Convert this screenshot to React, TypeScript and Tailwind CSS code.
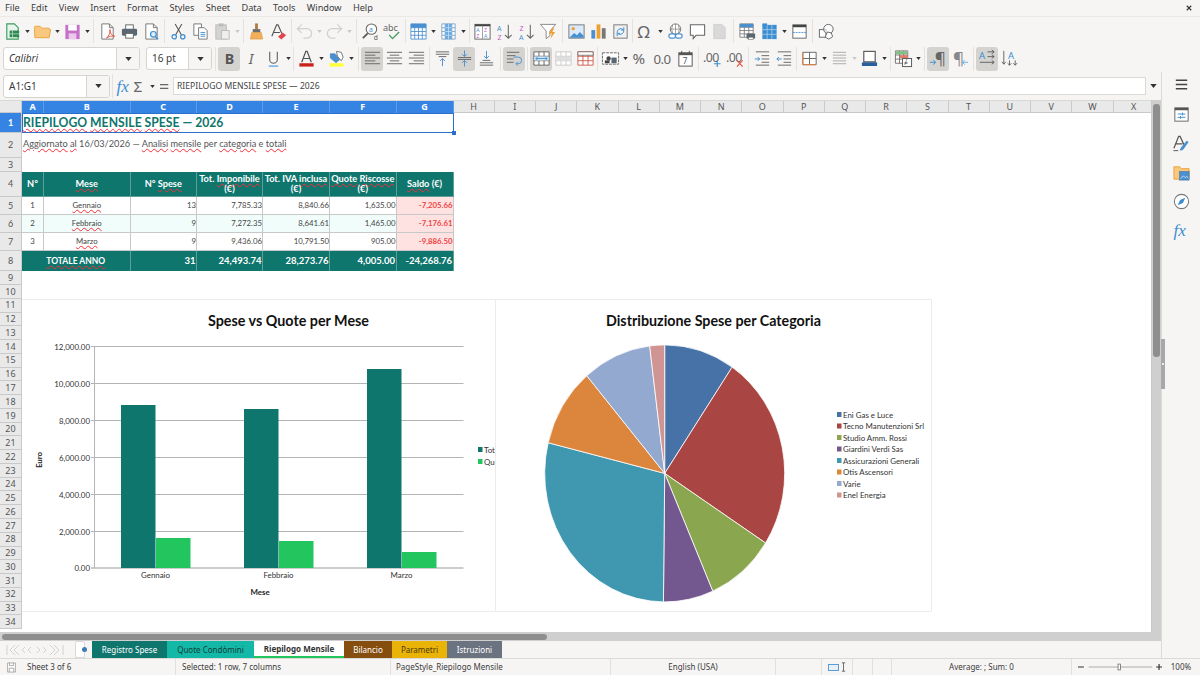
import type { ReactNode } from "react";

const SW = { fill: "none", strokeWidth: 1.1 };

function Lines({ rows, color = "#666", x = 3 }: { rows: number[][]; color?: string; x?: number }) {
  return (
    <path
      d={rows.map(([y, a, b]) => `M${a ?? x} ${y}H${b}`).join("")}
      stroke={color}
      fill="none"
      strokeWidth="1"
    />
  );
}

function Tbl({ x = 2, y = 3, w = 16, h = 14, c = 3, r = 3, color = "#666" }: { x?: number; y?: number; w?: number; h?: number; c?: number; r?: number; color?: string }) {
  const v = Array.from({ length: c - 1 }, (_, i) => `M${x + ((i + 1) * w) / c} ${y}v${h}`).join("");
  const z = Array.from({ length: r - 1 }, (_, i) => `M${x} ${y + ((i + 1) * h) / r}h${w}`).join("");
  return <path d={`M${x} ${y}h${w}v${h}h${-w}z${v}${z}`} stroke={color} fill="#fff" strokeWidth="0.9" />;
}

const doc = (s = "#777", f = "#fff") => <path d="M4 2h8l4 4v12H4zM12 2v4h4" stroke={s} fill={f} strokeWidth="1" />;

const ICONS: Record<string, ReactNode> = {
  new: (
    <>
      <path d="M4 2h8l4 4v12H4z" stroke="#3d9b5f" fill="#e8f5ec" strokeWidth="1.2" />
      <rect x="7" y="9" width="10" height="7" fill="#2f8a50" />
      <path d="M10 9v7M7 12.5h10" stroke="#cfe9d8" strokeWidth=".7" />
    </>
  ),
  open: <path d="M1.5 5.5a1 1 0 0 1 1-1h5l2 2h7a1 1 0 0 1 1 1V8h1l-1.5 8.5h-15z" fill="#f9c77e" stroke="#e8a33d" />,
  save: (
    <>
      <path d="M2.5 3h15v15h-15z" fill="#c671c8" />
      <rect x="5.5" y="3" width="9" height="6" fill="#fff" />
      <rect x="6" y="12" width="8" height="6" fill="#ecc8ed" />
    </>
  ),
  pdf: (
    <>
      {doc()}
      <path d="M9 17c3-3 4-6 3.5-9 0 4 2 6 5 7-3-.5-6 0-8.5 2z" stroke="#e0533d" fill="none" strokeWidth="1" />
    </>
  ),
  print: (
    <>
      <rect x="6" y="3" width="8" height="5" fill="#fff" stroke="#666" />
      <rect x="2" y="7" width="16" height="7.5" rx="1.5" fill="#5a6672" />
      <rect x="6" y="12" width="8" height="5" fill="#fff" stroke="#666" />
    </>
  ),
  preview: (
    <>
      {doc()}
      <circle cx="12" cy="13" r="3" stroke="#3d8ed1" fill="#dcecf9" strokeWidth="1.3" />
      <path d="M14 15.5l3 2.5" stroke="#3d8ed1" strokeWidth="1.5" />
    </>
  ),
  cut: (
    <>
      <path d="M7 13.5L13.5 2M13 13.5L6.5 2" stroke="#555" {...SW} />
      <circle cx="5.5" cy="15.5" r="2.3" stroke="#3d8ed1" fill="none" strokeWidth="1.3" />
      <circle cx="14.5" cy="15.5" r="2.3" stroke="#3d8ed1" fill="none" strokeWidth="1.3" />
    </>
  ),
  copy: (
    <>
      <path d="M3 2h8v12H3z" fill="#fff" stroke="#777" />
      <path d="M8 6h6l3 3v9H8z" fill="#fff" stroke="#777" />
      <Lines color="#4a90d0" rows={[[11, 10, 15], [13, 10, 15], [15, 10, 15]]} />
    </>
  ),
  paste: (
    <>
      <rect x="3" y="3" width="11" height="15" fill="#d3d3d3" stroke="#bbb" />
      <rect x="6" y="1.5" width="5" height="3" fill="#bbb" />
      <rect x="9" y="9" width="8" height="9" fill="#eee" stroke="#bbb" />
    </>
  ),
  clone: (
    <>
      <path d="M8.5 1.5h3v6h-3z" fill="#b07a3d" />
      <path d="M6 7.5h8V11H6z" fill="#6c6c6c" />
      <path d="M5 11h10l1.5 7h-13z" fill="#f2ae58" stroke="#d98f35" strokeWidth=".6" />
    </>
  ),
  clear: (
    <>
      <path d="M3 15L8 3h1.5l4 9M5 11h6.5" stroke="#555" fill="none" strokeWidth="1.2" />
      <path d="M9.5 15.5l5-4.5 3.5 3-5 4.5z" fill="#e0474c" />
    </>
  ),
  undo: <path d="M7 2.5L2.5 7 7 11.5M3 7h9.5a5 5 0 0 1 0 10H9" stroke="#d0d0d0" fill="none" strokeWidth="1.3" />,
  redo: <path d="M13 2.5L17.5 7 13 11.5M17 7H7.5a5 5 0 0 0 0 10H11" stroke="#d0d0d0" fill="none" strokeWidth="1.3" />,
  find: (
    <>
      <circle cx="11" cy="7.5" r="5.5" stroke="#666" fill="#fff" strokeWidth="1.1" />
      <path d="M7 12L2 17" stroke="#555" strokeWidth="1.8" />
      <text x="8.5" y="10" fontSize="7" fill="#3d8ed1">a</text>
      <text x="13.5" y="18.5" fontSize="7" fill="#555">d</text>
    </>
  ),
  spell: (
    <>
      <text x="0" y="9" fontSize="9.5" fill="#666">abc</text>
      <path d="M6.5 13.5l3.5 4 7-7" stroke="#3d9b5f" fill="none" strokeWidth="1.4" />
    </>
  ),
  rows: (
    <>
      <Tbl x={2} y={2} w={16} h={16} c={4} r={4} color="#4a90d0" />
      <rect x="2" y="2" width="16" height="4" fill="#4a90d0" />
    </>
  ),
  cols: (
    <>
      <Tbl x={3} y={2} w={14} h={16} c={4} r={4} color="#7a9dbb" />
      <rect x="6.5" y="2" width="7" height="16" fill="#6aaae2" />
      <path d="M10 2v16M6.5 6h7M6.5 10h7M6.5 14h7" stroke="#d7e9f8" strokeWidth=".7" />
    </>
  ),
  sort: (
    <>
      <rect x="2" y="2.5" width="16" height="15.5" fill="#fff" stroke="#666" />
      <rect x="2" y="2.5" width="16" height="2" fill="#444" />
      <path d="M10 4v14" stroke="#888" strokeWidth=".8" />
      <text x="3.5" y="10.5" fontSize="5.5" fill="#4a90d0">A</text>
      <text x="3.5" y="17" fontSize="5.5" fill="#c35fc9">Z</text>
      <text x="11.5" y="10.5" fontSize="5.5" fill="#c35fc9">Z</text>
      <text x="11.5" y="17" fontSize="5.5" fill="#4a90d0">A</text>
    </>
  ),
  sortaz: (
    <>
      <text x="2" y="9" fontSize="7.5" fill="#4a90d0">A</text>
      <text x="2.5" y="18.5" fontSize="7.5" fill="#c35fc9">Z</text>
      <path d="M14 3v14M10.5 13.5L14 17l3.5-3.5" stroke="#666" fill="none" strokeWidth="1.1" />
    </>
  ),
  sortza: (
    <>
      <text x="2.5" y="9" fontSize="7.5" fill="#c35fc9">Z</text>
      <text x="2" y="18.5" fontSize="7.5" fill="#4a90d0">A</text>
      <path d="M14 3v14M10.5 13.5L14 17l3.5-3.5" stroke="#666" fill="none" strokeWidth="1.1" />
    </>
  ),
  filter: (
    <>
      <path d="M1.5 2.5h16l-6 7v5l-4 3v-8z" fill="#fff" stroke="#888" />
      <path d="M14 6l-3.5 6h3l-1.5 6 5-7.5h-3l2-4.5z" fill="#f0a030" />
    </>
  ),
  image: (
    <>
      <rect x="2" y="3" width="16" height="14" fill="#dbeafa" stroke="#777" />
      <circle cx="6.5" cy="7" r="1.8" fill="#f0a030" />
      <path d="M2.5 16.5l5-5 3 2.5 3-3.5 4 4v2z" fill="#4a90d0" />
    </>
  ),
  chart: (
    <>
      <rect x="2.5" y="8.5" width="4" height="9" fill="#4a90d0" />
      <rect x="8" y="2.5" width="4" height="15" fill="#f0a030" />
      <rect x="13.5" y="6.5" width="4" height="11" fill="#777" />
    </>
  ),
  pivot: (
    <>
      <rect x="3" y="3" width="14" height="14" fill="#f1f1f1" stroke="#777" />
      <path d="M6.5 12a4 4 0 0 1 6.5-4M13.5 8.5a4 4 0 0 1-6 4" stroke="#3d8ed1" fill="none" />
      <path d="M13.5 5.5v3h-3M6.5 15v-3h3" stroke="#3d8ed1" fill="none" />
    </>
  ),
  omega: <text x="1.5" y="16.5" fontSize="18" fill="#666">Ω</text>,
  link: (
    <>
      <circle cx="10" cy="7.5" r="5.5" fill="#fff" stroke="#777" />
      <path d="M4.5 7.5h11M10 2v11M7 3q-2 4.5 0 9M13 3q2 4.5 0 9" stroke="#777" fill="none" strokeWidth=".7" />
      <rect x="3" y="12.5" width="7" height="4.5" rx="2.2" fill="#fff" stroke="#4a90d0" strokeWidth="1.2" />
      <rect x="10" y="12.5" width="7" height="4.5" rx="2.2" fill="#fff" stroke="#4a90d0" strokeWidth="1.2" />
    </>
  ),
  comment: <path d="M2.5 3h15v11h-9l-3 3.5V14h-3z" fill="#fff" stroke="#666" strokeWidth="1.1" />,
  note: <path d="M4 2.5h8.5L16 6v11.5H4z" fill="#d9d9d9" stroke="#d0d0d0" />,
  headers: (
    <>
      <Tbl x={2} y={2} w={14} h={14} c={3} r={4} color="#777" />
      <rect x="2" y="2" width="14" height="3.5" fill="#4a90d0" />
      <rect x="9" y="12" width="9" height="5.5" rx="1" fill="#5a6672" />
      <rect x="11" y="16" width="5" height="2.5" fill="#fff" stroke="#666" strokeWidth=".6" />
    </>
  ),
  freeze: (
    <>
      <rect x="2.5" y="3" width="15" height="15" fill="#3d8ed1" />
      <path d="M7.5 3v15M12.5 3v15M2.5 8h15M2.5 13h15" stroke="#bcd9f2" strokeWidth=".7" />
      <rect x="2.5" y="1.5" width="5" height="2.5" fill="#3d8ed1" />
    </>
  ),
  split: (
    <>
      <rect x="3" y="3" width="14" height="14" fill="#fff" stroke="#666" />
      <rect x="3" y="3" width="14" height="2.5" fill="#444" />
      <path d="M3 11h14" stroke="#4a90d0" strokeDasharray="2 1" />
    </>
  ),
  shapes: (
    <>
      <rect x="2.5" y="8" width="7" height="8" fill="#fff" stroke="#666" />
      <circle cx="12" cy="7.5" r="5" fill="#fff" fillOpacity=".6" stroke="#666" />
      <path d="M11 10.5l4 1 1.5 4-4 2.5-4-2z" fill="#fff" stroke="#666" />
    </>
  ),
  bold: <text x="5" y="15.5" fontSize="15" fontWeight="700" fill="#555">B</text>,
  italic: <text x="7" y="15.5" fontSize="15" fontStyle="italic" fill="#666">I</text>,
  underline: (
    <>
      <path d="M6 3v8a4 4 0 0 0 8 0V3" stroke="#666" fill="none" strokeWidth="1.2" />
      <path d="M5 18h10" stroke="#6aaae2" strokeWidth="1.5" />
    </>
  ),
  fontcolor: (
    <>
      <path d="M5 14L9.3 2.5h1.4L15 14M6.5 10h7" stroke="#555" fill="none" strokeWidth="1.3" />
      <rect x="2.5" y="15" width="15" height="3.5" fill="#c9211e" />
    </>
  ),
  bgcolor: (
    <>
      <path d="M3.5 5h5l5 6-4 3.5-6-5z" fill="#4a90d0" stroke="#3d7cb5" strokeWidth=".6" />
      <path d="M10 2.5l5 1 2 5-2 4-4-5z" fill="#fff" stroke="#666" strokeWidth=".9" />
      <rect x="2.5" y="15" width="15" height="3.5" fill="#ffff38" />
    </>
  ),
  left: <Lines rows={[[3.5, 2, 18], [6.5, 2, 13], [9.5, 2, 18], [12.5, 2, 13], [15.5, 2, 18]]} />,
  center: <Lines rows={[[3.5, 2, 18], [6.5, 5, 15], [9.5, 2, 18], [12.5, 5, 15], [15.5, 2, 18]]} />,
  right: <Lines rows={[[3.5, 2, 18], [6.5, 7, 18], [9.5, 2, 18], [12.5, 7, 18], [15.5, 2, 18]]} />,
  top: (
    <>
      <Lines rows={[[3, 3, 17], [5.5, 3, 17], [8, 6, 14]]} />
      <path d="M10 18v-8M7.5 12.5L10 10l2.5 2.5" stroke="#4a90d0" fill="none" />
    </>
  ),
  middle: (
    <>
      <Lines rows={[[9, 3, 17], [11, 3, 17]]} />
      <path d="M10 1.5v6M7.5 5.5L10 8l2.5-2.5M10 18.5v-6M7.5 14.5L10 12l2.5 2.5" stroke="#4a90d0" fill="none" />
    </>
  ),
  bottom: (
    <>
      <Lines rows={[[12, 6, 14], [14.5, 3, 17], [17, 3, 17]]} />
      <path d="M10 2v8M7.5 7.5L10 10l2.5-2.5" stroke="#4a90d0" fill="none" />
    </>
  ),
  wrap: (
    <>
      <Lines rows={[[3.5, 2, 15], [7, 2, 11], [10.5, 2, 9], [14, 2, 9]]} />
      <path d="M9 8.5h5q3.5 0 3.5 3.5T14 15.5h-2M13.5 13.5L11.5 15.5l2 2" stroke="#4a90d0" fill="none" />
    </>
  ),
  merge: (
    <>
      <Tbl x={2} y={3} w={16} h={14} c={3} r={3} color="#555" />
      <rect x="2.5" y="7.8" width="15" height="4.4" fill="#cfe4f7" />
      <path d="M4 10h12M6 8.3L4 10l2 1.7M14 8.3L16 10l-2 1.7" stroke="#3d8ed1" fill="none" strokeWidth=".9" />
    </>
  ),
  unmerge: (
    <>
      <Tbl x={2} y={3} w={16} h={14} c={3} r={3} color="#c4c4c4" />
      <rect x="2.5" y="7.8" width="15" height="4.4" fill="#dedede" />
    </>
  ),
  mergeoff: (
    <>
      <Tbl x={2} y={3} w={16} h={14} c={3} r={3} color="#c9503f" />
      <rect x="2" y="3" width="16" height="3.5" fill="#fff" stroke="#666" strokeWidth=".8" />
    </>
  ),
  currency: (
    <>
      <rect x="1.5" y="4" width="17" height="12" fill="#fff" stroke="#666" strokeDasharray="3 1" />
      <circle cx="8" cy="10" r="2.3" fill="#444" />
      <rect x="11" y="9" width="5.5" height="6" fill="#5a6672" />
      <rect x="4" y="12" width="5" height="3" fill="#444" />
    </>
  ),
  percent: <text x="0.5" y="15.5" fontSize="16" fill="#666">%</text>,
  number: <text x="-0.5" y="15.5" fontSize="14" letterSpacing="-.6" fill="#666">0.0</text>,
  date: (
    <>
      <rect x="3" y="4" width="14" height="14" fill="#fff" stroke="#555" />
      <rect x="3" y="4" width="14" height="2.5" fill="#555" />
      <path d="M6 2v3M14 2v3" stroke="#555" />
      <text x="7" y="16" fontSize="8.5" fill="#555">7</text>
    </>
  ),
  adddec: (
    <>
      <text x="0" y="14" fontSize="13" letterSpacing="-.6" fill="#666">.00</text>
      <path d="M15 12v7M11.5 15.5h7" stroke="#3d8ed1" strokeWidth="1.2" />
    </>
  ),
  remdec: (
    <>
      <text x="0" y="14" fontSize="13" letterSpacing="-.6" fill="#666">.00</text>
      <path d="M11.5 12l6 6.5M17.5 12l-6 6.5" stroke="#e0533d" strokeWidth="1.2" />
    </>
  ),
  indent: (
    <>
      <Lines rows={[[3, 3, 17], [7, 9, 17], [10.5, 9, 17], [14, 9, 17], [17, 3, 17]]} />
      <path d="M2 10.5h5M5 8.5l2 2-2 2" stroke="#3d8ed1" fill="none" />
    </>
  ),
  outdent: (
    <>
      <Lines rows={[[3, 3, 17], [7, 9, 17], [10.5, 9, 17], [14, 9, 17], [17, 3, 17]]} />
      <path d="M7 10.5H2M4 8.5l-2 2 2 2" stroke="#3d8ed1" fill="none" />
    </>
  ),
  borders: (
    <>
      <path d="M3 3.5h14v13H3zM10 3.5v13M3 10h14" stroke="#666" fill="#fff" />
      <path d="M3 3.5v13h14" stroke="#e8823d" fill="none" />
    </>
  ),
  bstyle: <Lines color="#aaa" rows={[[3.5, 3, 17], [6.5, 3, 17], [9.5, 3, 17], [12.5, 3, 17], [15.5, 3, 17]]} />,
  bcolor: (
    <>
      <rect x="4" y="2.5" width="12" height="11" fill="#fff" stroke="#555" strokeWidth="1.2" />
      <rect x="2" y="14" width="16" height="4" rx="1" fill="#2a6099" />
    </>
  ),
  cond: (
    <>
      <Tbl x={1.5} y={2} w={13} h={13} c={3} r={3} color="#666" />
      <rect x="1.5" y="2.5" width="13" height="3" fill="#80c080" />
      <rect x="6" y="6.5" width="8.5" height="3" fill="#e57a6b" />
      <rect x="9" y="10" width="9.5" height="8.5" fill="#fff" stroke="#555" />
      <text x="10.5" y="17" fontSize="7" fill="#444">≠</text>
    </>
  ),
  ltr: (
    <>
      <text x="6" y="15.5" fontSize="18" fill="#666">¶</text>
      <path d="M1 14h6M4.5 11.5L7 14l-2.5 2.500" stroke="#3d8ed1" fill="none" />
    </>
  ),
  rtl: (
    <>
      <text x="2" y="15.5" fontSize="18" fill="#888">¶</text>
      <path d="M18 14h-6M14.5 11.5L12 14l2.5 2.5" stroke="#6aaae2" fill="none" />
    </>
  ),
  texth: (
    <>
      <text x="1" y="10" fontSize="10" fill="#3d8ed1">A</text>
      <path d="M10 3h7M14.5 1l2.5 2-2.5 2M10 8h7M14.5 6l2.5 2-2.5 2M2 14h15M14.5 12l2.5 2-2.5 2" stroke="#555" fill="none" strokeWidth=".9" />
    </>
  ),
  textv: (
    <>
      <text x="8.5" y="11" fontSize="10" fill="#3d8ed1">A</text>
      <path d="M4 2v14M2 13.5l2 2.5 2-2.5M10 12v5M8 15l2 2 2-2M16 12v5M14 15l2 2 2-2" stroke="#555" fill="none" strokeWidth=".9" />
    </>
  ),
  menu: <path d="M4 5.5h12M4 10h12M4 14.5h12" stroke="#444" strokeWidth="1.7" />,
  props: (
    <>
      <rect x="3" y="3" width="14" height="14" fill="#fff" stroke="#666" />
      <rect x="3" y="3" width="14" height="2.5" fill="#555" />
      <path d="M6 9.5h8M6 13h8M11 8v3M9 11.5v3" stroke="#3d8ed1" />
    </>
  ),
  styles: (
    <>
      <path d="M2 15L7 2.5h1.5L13 12M4 10.5h7" stroke="#555" fill="none" strokeWidth="1.3" />
      <path d="M8 17q3 1 4.5-1.5l5-7-2-1.5-5.5 6.5q-1 2-2 3.5z" fill="#4a90d0" />
      <path d="M1.5 17.5h5" stroke="#555" />
    </>
  ),
  gallery: (
    <>
      <path d="M2 4h6l2 2h8v11H2z" fill="#f9c77e" stroke="#e8a33d" />
      <rect x="8" y="9" width="10" height="9" fill="#4a90d0" stroke="#3472a8" strokeWidth=".6" />
      <path d="M9 16.5l3-3 2 2 1.5-1.5 2 2" stroke="#e4f0fa" fill="none" strokeWidth=".8" />
    </>
  ),
  nav: (
    <>
      <circle cx="10" cy="10" r="7.5" fill="#fff" stroke="#777" strokeWidth="1.1" />
      <path d="M14 6l-2.5 5.5L6 14l2.5-5.500z" fill="#3d8ed1" />
    </>
  ),
  fx: <text x="1.5" y="15.5" fontSize="18" fontStyle="italic" fill="#3d8ed1" className="font-['Liberation_Serif',serif]">fx</text>,
  sigma: <text x="3" y="16.5" fontSize="18" fill="#666">Σ</text>,
  equal: <path d="M4 7.5h11M4 12.5h11" stroke="#666" strokeWidth="1.8" />,
  disk: (
    <>
      <path d="M4 3h12v14H4z" fill="#fff" stroke="#888" />
      <path d="M7 3v4h6V3M6.5 17v-6h7v6" fill="none" stroke="#888" />
    </>
  ),
};

function Ic({ n, box = false }: { n: string; box?: boolean }) {
  return (
    <span className={`flex h-[24px] w-[22px] shrink-0 items-center justify-center rounded-[3px] ${box ? "bg-[#d5d3d0]" : ""}`}>
      <svg viewBox="0 0 20 20" className="h-[19px] w-[19px] overflow-visible">{ICONS[n]}</svg>
    </span>
  );
}

function D({ off = false }: { off?: boolean }) {
  return (
    <span className="flex h-[24px] w-[8px] shrink-0 items-center justify-center">
      <svg viewBox="0 0 6 4" className="h-[3px] w-[5px]"><path d="M0 0h6L3 4z" fill={off ? "#c8c8c8" : "#333"} /></svg>
    </span>
  );
}

function Sep({ className }: { className: string }) {
  return (
    <span className={`flex h-[24px] shrink-0 justify-center ${className}`}>
      <span className="h-full w-px bg-[#e4e2df]" />
    </span>
  );
}

function Combo({ text, className, drop, italic }: { text: string; className: string; drop: string; italic?: boolean }) {
  return (
    <div className={`flex h-[23px] shrink-0 overflow-hidden rounded-[3px] border border-[#d6d4d1] bg-white ${className}`}>
      <span className={`flex-1 self-center pl-[5px] text-[10px] text-[#3a3a3a] ${italic ? "italic" : ""}`}>{text}</span>
      <span className={`flex items-center justify-center border-l border-[#d6d4d1] bg-[#f6f5f4] ${drop}`}>
        <svg viewBox="0 0 8 5" className="h-[4px] w-[7px]"><path d="M0 0h8L4 5z" fill="#333" /></svg>
      </span>
    </div>
  );
}

const menus = ["File", "Edit", "View", "Insert", "Format", "Styles", "Sheet", "Data", "Tools", "Window", "Help"];

const columns: [string, string][] = [
  ["A", "w-[22px]"],
  ["B", "w-[86.5px]"],
  ["C", "w-[66.5px]"],
  ["D", "w-[66px]"],
  ["E", "w-[67px]"],
  ["F", "w-[66.5px]"],
  ["G", "w-[57px]"],
];
const plainColumns = ["H", "I", "J", "K", "L", "M", "N", "O", "P", "Q", "R", "S", "T", "U", "V", "W", "X"];

function W({ children }: { children: ReactNode }) {
  return <span className="underline decoration-red-500 decoration-wavy decoration-1 underline-offset-1">{children}</span>;
}

function RowHead({ n, on = false }: { n: number; on?: boolean }) {
  return (
    <div className={`flex w-[22px] shrink-0 items-center justify-center border-r border-b border-[#c9c9c9] text-[9px] ${on ? "bg-[#3584e4] font-bold text-white" : "bg-[#e9e9e9] text-[#555]"}`}>
      {n}
    </div>
  );
}

function Head({ w, children }: { w: string; children: ReactNode }) {
  return (
    <div className={`flex shrink-0 items-center justify-center border-r border-b border-[#5f9f99] bg-[#0f766e] text-center text-[9.2px] leading-[10px] font-bold whitespace-nowrap text-white ${w}`}>
      <span>{children}</span>
    </div>
  );
}

const body = [
  { n: 5, id: "1", mese: "Gennaio", sp: "13", imp: "7,785.33", iva: "8,840.66", q: "1,635.00", s: "-7,205.66", bg: "bg-white" },
  { n: 6, id: "2", mese: "Febbraio", sp: "9", imp: "7,272.35", iva: "8,641.61", q: "1,465.00", s: "-7,176.61", bg: "bg-[#f0fdfa]" },
  { n: 7, id: "3", mese: "Marzo", sp: "9", imp: "9,436.06", iva: "10,791.50", q: "905.00", s: "-9,886.50", bg: "bg-white" },
];

function Td({ w, bg, children, center }: { w: string; bg: string; children: ReactNode; center?: boolean }) {
  return (
    <div className={`flex shrink-0 items-center border-r border-b border-[#c8c8c8] text-[7.8px] text-[#444] ${center ? "justify-center" : "justify-end"} ${w} ${bg}`}>
      <span>{children}</span>
    </div>
  );
}

function Tot({ w, children }: { w: string; children: ReactNode }) {
  return (
    <div className={`flex shrink-0 items-center justify-end border-r border-[#5f9f99] bg-[#0f766e] pr-[0.5px] text-[9.5px] font-bold text-white ${w}`}>
      {children}
    </div>
  );
}

const emptyRows = Array.from({ length: 25 }, (_, i) => i + 10);

const bars = [
  { label: "Gennaio", x: 121, t: 405, q: 538 },
  { label: "Febbraio", x: 244, t: 409, q: 541 },
  { label: "Marzo", x: 367, t: 369, q: 552 },
];
const ticks = [
  ["12,000.00", 346.5],
  ["10,000.00", 383.5],
  ["8,000.00", 420.5],
  ["6,000.00", 457.5],
  ["4,000.00", 494.5],
  ["2,000.00", 531.5],
  ["0.00", 568],
] as const;

function BarChart() {
  return (
    <svg viewBox="22 299 473 313" className="h-[313px] w-[473px] shrink-0 bg-white font-['Lato',sans-serif]">
      <path d="M22 299.5H495M22 611.5H495" stroke="#ececec" />
      <text x="288.5" y="326" fontSize="15" fontWeight="700" fill="#111" textAnchor="middle" textLength="161" lengthAdjust="spacingAndGlyphs">Spese vs Quote per Mese</text>
      {ticks.map(([l, y]) => (
        <g key={l}>
          <path d={`M91 ${y}H463.5`} stroke={l === "0.00" ? "#999" : "#b5b5b5"} strokeWidth="1" />
          <text x="90" y={y + 3} fontSize="7.9" fill="#333" textAnchor="end">{l}</text>
        </g>
      ))}
      <path d="M94.5 346v222" stroke="#b5b5b5" />
      {bars.map((b) => (
        <g key={b.label}>
          <rect x={b.x} y={b.t} width="34.5" height={568 - b.t} fill="#0f766e" />
          <rect x={b.x + 35} y={b.q} width="34.5" height={568 - b.q} fill="#22c55e" />
          <text x={b.x + 34.5} y="578" fontSize="7.9" fill="#333" textAnchor="middle">{b.label}</text>
        </g>
      ))}
      <text x="260" y="595" fontSize="7.9" fontWeight="700" fill="#222" textAnchor="middle">Mese</text>
      <text x="0" y="0" fontSize="7.9" fontWeight="700" fill="#222" textAnchor="middle" transform="translate(42 460) rotate(-90)">Euro</text>
      <rect x="478" y="447" width="4.5" height="5" fill="#0f766e" />
      <rect x="478" y="459" width="4.5" height="5" fill="#22c55e" />
      <text x="484" y="452.5" fontSize="7.9" fill="#333">Tot. Imponibile</text>
      <text x="484" y="464.5" fontSize="7.9" fill="#333">Quote Riscosse</text>
    </svg>
  );
}

const slices = [
  { name: "Eni Gas e Luce", to: 34.2, c: "#4672a8" },
  { name: "Tecno Manutenzioni Srl", to: 122.8, c: "#a94542" },
  { name: "Studio Amm. Rossi", to: 156.4, c: "#8aa64f" },
  { name: "Giardini Verdi Sas", to: 180.6, c: "#72588f" },
  { name: "Assicurazioni Generali", to: 283.8, c: "#4098b0" },
  { name: "Otis Ascensori", to: 319.5, c: "#dc853d" },
  { name: "Varie", to: 352.8, c: "#93a9cf" },
  { name: "Enel Energia", to: 360, c: "#d09493" },
];
const legendY = [414.5, 426, 437.5, 449, 460.5, 472, 483.5, 495];

function wedge(a: number, b: number) {
  const cx = 664.7;
  const cy = 473.4;
  const rx = 120;
  const ry = 128.5;
  const p = (d: number) => {
    const t = (d * Math.PI) / 180;
    return `${cx + rx * Math.sin(t)} ${cy - ry * Math.cos(t)}`;
  };
  return `M${cx} ${cy}L${p(a)}A${rx} ${ry} 0 ${b - a > 180 ? 1 : 0} 1 ${p(b)}Z`;
}

function PieChart() {
  return (
    <svg viewBox="495 299 437 313" className="h-[313px] w-[437px] shrink-0 bg-white font-['Lato',sans-serif]">
      <path d="M495.5 299.5H931.5V611.5H495.5z" fill="none" stroke="#ececec" />
      <text x="713.5" y="326" fontSize="15" fontWeight="700" fill="#111" textAnchor="middle" textLength="215" lengthAdjust="spacingAndGlyphs">Distribuzione Spese per Categoria</text>
      {slices.map((s, i) => (
        <path key={s.name} d={wedge(i ? slices[i - 1].to : 0, s.to)} fill={s.c} stroke="#fff" strokeWidth=".8" />
      ))}
      {slices.map((s, i) => (
        <g key={s.name}>
          <rect x="837" y={legendY[i] - 2.5} width="4.5" height="5" fill={s.c} />
          <text x="843" y={legendY[i] + 3} fontSize="7.9" fill="#333">{s.name}</text>
        </g>
      ))}
    </svg>
  );
}

export default function App() {
  return (
    <div className="flex h-[675px] w-[1200px] flex-col overflow-hidden bg-[#f6f5f4] font-['Noto_Sans',sans-serif] text-[#3c3c3c]">
      <div className="flex h-[17px] items-center border-b border-[#ebe9e6] pl-[5px] text-[9.2px]">
        <div className="flex flex-1 gap-[11.3px]">
          {menus.map((m) => <span key={m}>{m}</span>)}
        </div>
        <svg viewBox="0 0 8 8" className="mr-[8px] h-[6px] w-[6px]"><path d="M1 1l6 6M7 1L1 7" stroke="#333" strokeWidth="1.5" /></svg>
      </div>

      <div className="flex h-[28px] items-center pl-[1px]">
        <Ic n="new" /><D /><Ic n="open" /><D /><Ic n="save" /><D /><Sep className="w-[5px]" />
        <Ic n="pdf" /><Ic n="print" /><Ic n="preview" /><Sep className="w-[5px]" />
        <Ic n="cut" /><Ic n="copy" /><Ic n="paste" /><D off /><Sep className="w-[4px]" />
        <Ic n="clone" /><Ic n="clear" /><Sep className="w-[4px]" />
        <Ic n="undo" /><D off /><Ic n="redo" /><D off /><Sep className="w-[6px]" />
        <Ic n="find" /><Ic n="spell" /><Sep className="w-[4px]" />
        <Ic n="rows" /><D /><Ic n="cols" /><D /><Sep className="w-[4px]" />
        <Ic n="sort" /><Ic n="sortaz" /><Ic n="sortza" /><Ic n="filter" /><Sep className="w-[6px]" />
        <Ic n="image" /><Ic n="chart" /><Ic n="pivot" /><Sep className="w-[3px]" />
        <Ic n="omega" /><D /><Ic n="link" /><Ic n="comment" /><Ic n="note" /><Sep className="w-[6px]" />
        <Ic n="headers" /><Ic n="freeze" /><D /><Ic n="split" /><Sep className="w-[5px]" />
        <Ic n="shapes" />
      </div>

      <div className="flex h-[27px] items-center pl-[3px]">
        <Combo text="Calibri" italic className="w-[137px]" drop="w-[23px]" />
        <span className="w-[6px] shrink-0" />
        <Combo text="16 pt" className="w-[66px]" drop="w-[23px]" />
        <Sep className="w-[6px]" />
        <Ic n="bold" box /><Ic n="italic" /><Ic n="underline" /><D /><Sep className="w-[3px]" />
        <Ic n="fontcolor" /><D /><Ic n="bgcolor" /><D /><Sep className="w-[6px]" />
        <Ic n="left" box /><Ic n="center" /><Ic n="right" /><Sep className="w-[4px]" />
        <Ic n="top" /><Ic n="middle" box /><Ic n="bottom" /><Sep className="w-[6px]" />
        <Ic n="wrap" box /><Sep className="w-[5px]" />
        <Ic n="merge" box /><Ic n="unmerge" /><Ic n="mergeoff" /><Sep className="w-[3px]" />
        <Ic n="currency" /><D /><span className="w-px shrink-0" /><Ic n="percent" /><Ic n="number" /><Ic n="date" /><Sep className="w-[5px]" />
        <Ic n="adddec" /><span className="w-px shrink-0" /><Ic n="remdec" /><Sep className="w-[5px]" />
        <Ic n="indent" /><Ic n="outdent" /><Sep className="w-[3px]" />
        <Ic n="borders" /><D /><Ic n="bstyle" /><D off /><Ic n="bcolor" /><D /><Sep className="w-[4px]" />
        <Ic n="cond" /><D /><Sep className="w-[5px]" />
        <Ic n="ltr" box /><Ic n="rtl" /><Sep className="w-[5px]" />
        <Ic n="texth" box /><Ic n="textv" />
      </div>

      <div className="flex min-h-0 flex-1">
        <div className="flex w-[1162px] shrink-0 flex-col border-r border-[#dcdad7]">
          <div className="flex h-[28px] shrink-0 items-center pl-[3px]">
            <Combo text="A1:G1" className="w-[107px]" drop="w-[23px]" />
            <Sep className="w-[4px]" />
            <span className="flex w-[20px] shrink-0 justify-center"><svg viewBox="0 0 20 20" className="h-[19px] w-[19px] overflow-visible">{ICONS.fx}</svg></span>
            <span className="flex w-[10px] shrink-0 justify-center"><svg viewBox="0 0 20 20" className="h-[17px] w-[17px] shrink-0 overflow-visible">{ICONS.sigma}</svg></span>
            <span className="w-[4px] shrink-0" />
            <D />
            <span className="flex w-[16px] shrink-0 justify-center"><svg viewBox="0 0 20 20" className="h-[15px] w-[15px]">{ICONS.equal}</svg></span>
            <div className="ml-[1px] flex h-[18px] w-[973px] shrink-0 items-center border border-[#dcdad7] bg-white pl-[3px] text-[8.6px] text-[#444]">
              RIEPILOGO MENSILE SPESE — 2026
            </div>
            <span className="flex flex-1 justify-center">
              <svg viewBox="0 0 8 5" className="h-[4px] w-[7px]"><path d="M0 0h8L4 5z" fill="#333" /></svg>
            </span>
          </div>

          <div className="flex min-h-0 flex-1">
            <div className="relative w-[1151px] shrink-0 overflow-hidden bg-white">
              <div className="flex h-[13px] border-t border-[#d8d8d8] text-[9px]">
                <div className="w-[22px] shrink-0 border-r border-b border-[#c9c9c9] bg-[#e9e9e9]" />
                {columns.map(([c, w]) => (
                  <div key={c} className={`flex shrink-0 items-center justify-center border-r border-[#5c9be8] bg-[#3584e4] font-bold text-white ${w}`}>{c}</div>
                ))}
                {plainColumns.map((c) => (
                  <div key={c} className="flex w-[41.25px] shrink-0 items-center justify-center border-r border-b border-[#c9c9c9] bg-[#e9e9e9] text-[#555]">{c}</div>
                ))}
              </div>

              <div className="flex h-[20px] font-['Lato',sans-serif]">
                <RowHead n={1} on />
                <div className="relative flex w-[432px] items-center border-[1.5px] border-[#2a6fc9] pb-[3px] text-[14px] font-bold text-[#0f766e]">
                  <span className="inline-block origin-left scale-x-[.87] whitespace-nowrap">
                    <W>RIEPILOGO</W> <W>MENSILE</W> <W>SPESE</W> — 2026
                  </span>
                  <span className="absolute -right-[3px] -bottom-[3px] h-[4px] w-[4px] bg-[#2a6fc9]" />
                </div>
              </div>
              <div className="flex h-[25px] font-['Lato',sans-serif]">
                <RowHead n={2} />
                <div className="flex items-center pb-[3px] pl-[1px] text-[9.2px] whitespace-nowrap text-[#555]">
                  <span>
                    <W>Aggiornato</W> <W>al</W> 16/03/2026 — <W>Analisi</W> <W>mensile</W> per <W>categoria</W> e <W>totali</W>
                  </span>
                </div>
              </div>
              <div className="flex h-[14px]"><RowHead n={3} /></div>

              <div className="flex h-[25px] font-['Lato',sans-serif]">
                <RowHead n={4} />
                <Head w="w-[22px]">N°</Head>
                <Head w="w-[86.5px]"><W>Mese</W></Head>
                <Head w="w-[66.5px]">N° <W>Spese</W></Head>
                <Head w="w-[66px]">Tot. <W>Imponibile</W><br />(€)</Head>
                <Head w="w-[67px]">Tot. IVA <W>inclusa</W><br />(€)</Head>
                <Head w="w-[66.5px]"><W>Quote</W> <W>Riscosse</W><br />(€)</Head>
                <Head w="w-[57px]"><W>Saldo</W> (€)</Head>
              </div>
              {body.map((r) => (
                <div key={r.n} className="flex h-[18px] font-['Lato',sans-serif]">
                  <RowHead n={r.n} />
                  <Td w="w-[22px]" bg={r.bg} center>{r.id}</Td>
                  <Td w="w-[86.5px]" bg={r.bg} center><W>{r.mese}</W></Td>
                  <Td w="w-[66.5px]" bg={r.bg}>{r.sp}</Td>
                  <Td w="w-[66px]" bg={r.bg}>{r.imp}</Td>
                  <Td w="w-[67px]" bg={r.bg}>{r.iva}</Td>
                  <Td w="w-[66.5px]" bg={r.bg}>{r.q}</Td>
                  <Td w="w-[57px]" bg="bg-[#fee2e2]"><b className="text-[#ef4444]">{r.s}</b></Td>
                </div>
              ))}
              <div className="flex h-[20px] font-['Lato',sans-serif]">
                <RowHead n={8} />
                <div className="flex w-[108.5px] shrink-0 items-center justify-center border-r border-[#5f9f99] bg-[#0f766e] text-[8.5px] font-bold text-white">
                  <W>TOTALE ANNO</W>
                </div>
                <Tot w="w-[66.5px]">31</Tot>
                <Tot w="w-[66px]">24,493.74</Tot>
                <Tot w="w-[67px]">28,273.76</Tot>
                <Tot w="w-[66.5px]">4,005.00</Tot>
                <Tot w="w-[57px]">-24,268.76</Tot>
              </div>
              <div className="flex h-[14px]"><RowHead n={9} /></div>
              {emptyRows.map((n) => (
                <div key={n} className="flex h-[13.77px]"><RowHead n={n} /></div>
              ))}

              <div className="absolute top-[199px] left-[22px] flex">
                <BarChart />
                <PieChart />
              </div>
            </div>

            <div className="relative flex-1 border-l border-[#c9c9c9] bg-[#cfcfcf]">
              <div className="mx-auto mt-[4px] h-[253px] w-[7px] rounded-[3px] bg-[#8e8e8e]" />
            </div>
          </div>

          <div className="flex h-[9px] shrink-0 items-center bg-[#cfcfcf] pl-[2px]">
            <div className="h-[6px] w-[545px] rounded-[3px] bg-[#8e8e8e]" />
          </div>

          <div className="flex h-[17px] shrink-0 items-center pl-[5px] text-[8px]">
            <div className="flex w-[60px] shrink-0">
              <svg viewBox="0 0 60 12" className="h-[12px] w-[60px]">
                <path d="M2 1v10M10 1L5 6l5 5M14 1L9 6l5 5M20 3L17 6l3 3M26 3l-3 3 3 3M32 3l3 3-3 3M38 3l3 3-3 3M45 1l5 5-5 5M49 1l5 5-5 5M58 1v10" stroke="#d2d2d2" fill="none" />
              </svg>
            </div>
            <div className="ml-[10px] flex h-full w-[17px] shrink-0 items-center">
              <span className="h-full w-[10px] rounded-t-[2px] border border-[#dcdad7] bg-white" />
              <span className="-ml-[3px] h-[5px] w-[5px] rounded-full bg-[#3d7cb5]" />
            </div>
            <div className="flex h-full w-[75px] shrink-0 items-center justify-center bg-[#0f766e] text-white">Registro Spese</div>
            <div className="flex h-full w-[87px] shrink-0 items-center justify-center bg-[#14b8a6] text-[#10403c]">Quote Condòmini</div>
            <div className="flex h-full w-[90px] shrink-0 items-center justify-center border-b-2 border-[#22c55e] bg-white font-bold text-[#333]">Riepilogo Mensile</div>
            <div className="flex h-full w-[48px] shrink-0 items-center justify-center bg-[#854d0e] text-white">Bilancio</div>
            <div className="flex h-full w-[55px] shrink-0 items-center justify-center bg-[#eab308] text-[#4a3a05]">Parametri</div>
            <div className="flex h-full w-[55px] shrink-0 items-center justify-center bg-[#6b7280] text-white">Istruzioni</div>
          </div>
        </div>

        <div className="relative flex flex-1 flex-col items-center pl-[1px]">
          <span className="absolute top-[267px] -left-[1px] flex h-[50px] w-[4px] items-center justify-center bg-[#a8a8a8]">
            <span className="h-[2px] w-[2px] rounded-full bg-white" />
          </span>
          <div className="ml-[-1px] flex h-[24px] items-center"><svg viewBox="0 0 20 20" className="h-[19px] w-[19px]">{ICONS.menu}</svg></div>
          <div className="mt-[9px] ml-[-1px] flex flex-col items-center gap-[10px]">
            <svg viewBox="0 0 20 20" className="h-[19px] w-[19px]">{ICONS.props}</svg>
            <svg viewBox="0 0 20 20" className="h-[19px] w-[19px]">{ICONS.styles}</svg>
            <svg viewBox="0 0 20 20" className="h-[19px] w-[19px]">{ICONS.gallery}</svg>
            <svg viewBox="0 0 20 20" className="h-[19px] w-[19px]">{ICONS.nav}</svg>
            <svg viewBox="0 0 20 20" className="h-[19px] w-[19px] overflow-visible">{ICONS.fx}</svg>
          </div>
        </div>
      </div>

      <div className="flex h-[17px] shrink-0 items-center border-t border-[#dcdad7] text-[8px] [&>div]:flex [&>div]:h-full [&>div]:shrink-0 [&>div]:items-center">
        <div className="w-[22px] justify-center"><svg viewBox="0 0 20 20" className="h-[13px] w-[13px]">{ICONS.disk}</svg></div>
        <div className="w-[153px] pl-[5px]">Sheet 3 of 6</div>
        <div className="w-[215px] border-l border-[#e2e0dd] pl-[6px]">Selected: 1 row, 7 columns</div>
        <div className="w-[220px] border-l border-[#e2e0dd] pl-[5px]">PageStyle_Riepilogo Mensile</div>
        <div className="w-[165px] justify-center border-l border-[#e2e0dd]">English (USA)</div>
        <div className="w-[46px] border-l border-[#e2e0dd]" />
        <div className="w-[31px] justify-center gap-[2px] border-l border-[#e2e0dd]">
          <span className="h-[7px] w-[11px] border border-[#5a9bd5] bg-[#e6f0f9]" />
          <svg viewBox="0 0 6 12" className="h-[12px] w-[5px]"><path d="M1 1h4M3 1v10M1 11h4" stroke="#555" fill="none" /></svg>
        </div>
        <div className="w-[20px] border-l border-[#e2e0dd]" />
        <div className="w-[19px] border-l border-[#e2e0dd]" />
        <div className="w-[180px] justify-center border-l border-[#e2e0dd]">Average: ; Sum: 0</div>
        <div className="w-[91px] border-l border-[#e2e0dd] pl-[6px]">
          <svg viewBox="0 0 86 10" className="h-[10px] w-[86px]">
            <path d="M0 5h6M80 5h6M83 2v6" stroke="#333" strokeWidth="1.2" />
            <path d="M11 5h65" stroke="#999" strokeWidth=".8" />
            <rect x="41" y="2" width="2.5" height="6" fill="#fff" stroke="#555" strokeWidth=".7" />
          </svg>
        </div>
        <div className="w-[38px] justify-center">100%</div>
      </div>
    </div>
  );
}
